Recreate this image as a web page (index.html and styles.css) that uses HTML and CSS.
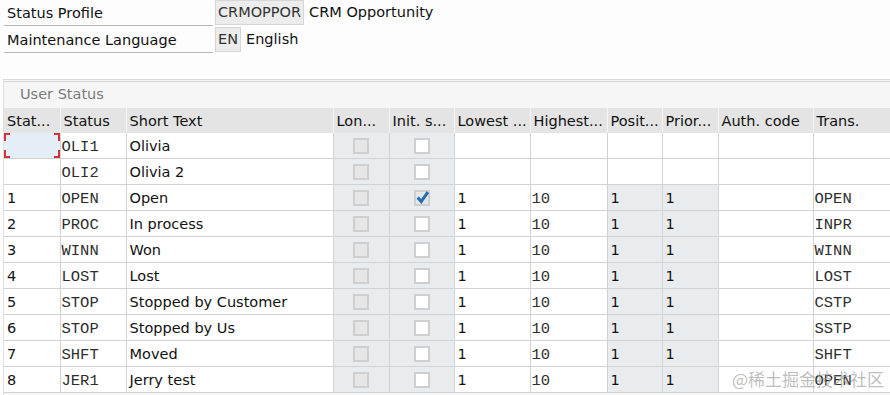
FILE: index.html
```html
<!DOCTYPE html>
<html lang="en">
<head>
    <meta charset="UTF-8">
    <title>Status Profile - CRMOPPOR</title>
    <link rel="stylesheet" href="styles.css">
</head>
<body>
    <div class="header">
        <div class="field-row">
            <div class="label">Status Profile</div>
            <div class="value-box">CRMOPPOR</div>
            <div class="desc">CRM Opportunity</div>
        </div>
        <div class="field-row">
            <div class="label">Maintenance Language</div>
            <div class="value-box">EN</div>
            <div class="desc">English</div>
        </div>
    </div>

    <div class="panel">
        <div class="panel-title">User Status</div>
        <table class="grid">
            <colgroup>
                <col style="width:56px"><col style="width:66px"><col style="width:207px">
                <col style="width:56px"><col style="width:65px"><col style="width:76px">
                <col style="width:77px"><col style="width:55px"><col style="width:56px">
                <col style="width:95px"><col style="width:78px">
            </colgroup>
            <thead>
                <tr>
                    <th>Stat...</th><th>Status</th><th>Short Text</th><th>Lon...</th><th>Init. s...</th>
                    <th>Lowest ...</th><th>Highest...</th><th>Posit...</th><th>Prior...</th><th>Auth. code</th><th>Trans.</th>
                </tr>
            </thead>
            <tbody id="rows"></tbody>
        </table>
    </div>

    <div class="watermark">@稀土掘金技术社区</div>

    <script>
        const statuses = [
            { no: "", code: "OLI1", text: "Olivia", init: false, empty: true, trans: "" },
            { no: "", code: "OLI2", text: "Olivia 2", init: false, empty: true, trans: "" },
            { no: "1", code: "OPEN", text: "Open", init: true, trans: "OPEN" },
            { no: "2", code: "PROC", text: "In process", init: false, trans: "INPR" },
            { no: "3", code: "WINN", text: "Won", init: false, trans: "WINN" },
            { no: "4", code: "LOST", text: "Lost", init: false, trans: "LOST" },
            { no: "5", code: "STOP", text: "Stopped by Customer", init: false, trans: "CSTP" },
            { no: "6", code: "STOP", text: "Stopped by Us", init: false, trans: "SSTP" },
            { no: "7", code: "SHFT", text: "Moved", init: false, trans: "SHFT" },
            { no: "8", code: "JER1", text: "Jerry test", init: false, trans: "OPEN" }
        ];

        const tbody = document.getElementById("rows");

        statuses.forEach((s, index) => {
            const tr = document.createElement("tr");
            const first = index === 0 ? ' class="focus"' : "";
            const check = s.init
                ? '<span class="chk checked"><svg viewBox="0 0 14 14" width="15" height="15"><path d="M2.5 7 L5.8 10.8 L12 2" fill="none" stroke="#1f6fb8" stroke-width="2.8"/></svg></span>'
                : '<span class="chk"></span>';
            const grey = s.empty ? "" : " grey";
            tr.innerHTML =
                `<td${first}>${first ? '<span class="corner tl"></span><span class="corner bl"></span><span class="corner tr"></span><span class="corner br"></span>' : ""}${s.no}</td>` +
                `<td class="mono">${s.code}</td>` +
                `<td>${s.text}</td>` +
                `<td class="grey center"><span class="chk off"></span></td>` +
                `<td class="grey center">${check}</td>` +
                `<td>${s.empty ? "" : "1"}</td>` +
                `<td class="mono">${s.empty ? "" : "10"}</td>` +
                `<td class="${grey}">${s.empty ? "" : "1"}</td>` +
                `<td class="${grey}">${s.empty ? "" : "1"}</td>` +
                `<td></td>` +
                `<td class="mono">${s.trans}</td>`;
            tbody.appendChild(tr);
        });
    </script>
</body>
</html>
```

FILE: styles.css
```css
body {
    margin: 0;
    background-color: #fdfdfd;
    font-family: "DejaVu Sans", sans-serif;
    font-size: 14px;
    color: #111;
    width: 890px;
    height: 395px;
    overflow: hidden;
    position: relative;
}
.field-row {
    display: flex;
    align-items: center;
    height: 26px;
    margin-bottom: 1px;
}
.label {
    width: 206px;
    margin-left: 4px;
    padding-left: 3px;
    height: 24px;
    line-height: 24px;
    border-bottom: 1px solid #b8b8b8;
    font-size: 14.5px;
}
.value-box {
    margin-left: 2px;
    height: 23px;
    line-height: 23px;
    padding: 0 2px;
    background: #ececec;
    border: 1px solid #d6d6d6;
    font-size: 14.5px;
    color: #333;
    align-self: flex-start;
}
.desc {
    margin-left: 5px;
    font-size: 14.5px;
    align-self: flex-start;
    line-height: 25px;
}
.panel {
    margin: 26px 0 0 3px;
    border-top: 3px double #d8d8d8;
    border-left: 1px solid #e0e0e0;
    background: #f6f6f6;
    height: 320px;
}
.panel-title {
    height: 26px;
    line-height: 24px;
    padding-left: 16px;
    color: #7a7a7a;
    font-size: 14.5px;
}
.grid {
    border-collapse: collapse;
    table-layout: fixed;
    width: 887px;
    background: #fff;
}
.grid th {
    background: #e4e4e4;
    font-weight: normal;
    text-align: left;
    height: 25px;
    padding: 0 3px;
    border-right: 1px solid #f4f4f4;
    white-space: nowrap;
    overflow: hidden;
    font-size: 14.5px;
}
.grid td {
    height: 25px;
    padding: 0 3px;
    border-right: 1px solid #d2d2d2;
    border-bottom: 1px solid #d2d2d2;
    white-space: nowrap;
    overflow: hidden;
    font-size: 14.5px;
}
.grid td.mono {
    font-family: "Liberation Mono", monospace;
    font-size: 15.5px;
    color: #2e2e2e;
    padding: 3px 0 0 1px;
    height: 22px;
}
.grid td.grey {
    background: #e9ecef;
}
.grid td.center {
    text-align: center;
}
.grid td.focus {
    background: #e3eef7;
    position: relative;
}
.corner {
    position: absolute;
    width: 4px;
    height: 6px;
    border-color: #d0343a;
    border-style: solid;
    border-width: 0;
}
.corner.tl { left: 0; top: 0; border-left-width: 2px; border-top-width: 2px; }
.corner.bl { left: 0; bottom: 0; border-left-width: 2px; border-bottom-width: 2px; }
.corner.tr { right: 0; top: 0; border-right-width: 2px; border-top-width: 2px; }
.corner.br { right: 0; bottom: 0; border-right-width: 2px; border-bottom-width: 2px; }
.chk {
    display: inline-block;
    width: 12px;
    height: 12px;
    border: 2px solid #cfcfcf;
    background: #fff;
    vertical-align: middle;
    position: relative;
}
.chk.off,
.chk.checked {
    background: #e6e6e6;
}
.chk svg {
    position: absolute;
    left: -1px;
    top: -2px;
}
.watermark {
    position: absolute;
    right: 6px;
    bottom: 4px;
    font-family: "Noto Sans CJK SC", sans-serif;
    font-size: 17px;
    color: rgba(160, 160, 160, 0.7);
}
```
